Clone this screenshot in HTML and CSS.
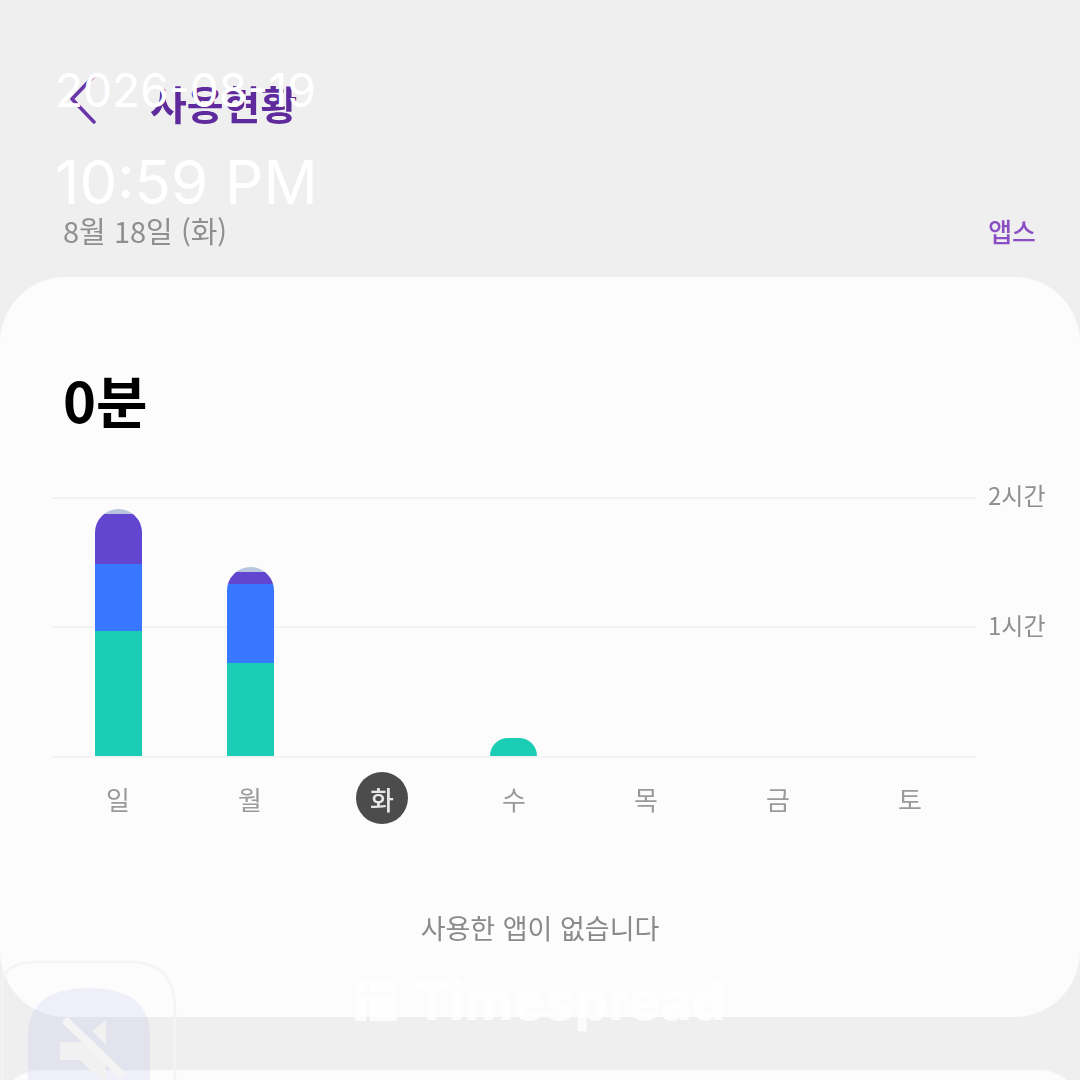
FILE: index.html
```html
<!DOCTYPE html>
<html lang="ko">

<head>
    <meta charset="UTF-8">
    <meta name="viewport" content="width=device-width, initial-scale=1.0">
    <title>사용현황</title>
    <link rel="stylesheet" href="styles.css">
</head>

<body>
    <div class="page">
        <header class="app-bar">
            <svg class="back-icon" width="26" height="52" viewBox="0 0 26 52">
                <path d="M24 2 L2 25 L24 48" fill="none" stroke="#6a35a8" stroke-width="3.5" stroke-linecap="round" stroke-linejoin="round" />
            </svg>
            <h1 class="app-title">사용현황</h1>
        </header>

        <div class="sub-bar">
            <span class="sub-date">8월 18일 (화)</span>
            <span class="sub-link">앱스</span>
        </div>

        <main class="card">
            <div class="total">0분</div>

            <div class="chart">
                <div class="plot">
                    <div class="slot">
                        <div class="bar">
                            <div class="seg seg-top" style="height: 5px"></div>
                            <div class="seg seg-purple" style="height: 50px"></div>
                            <div class="seg seg-blue" style="height: 67px"></div>
                            <div class="seg seg-green" style="height: 125px"></div>
                        </div>
                    </div>
                    <div class="slot">
                        <div class="bar">
                            <div class="seg seg-top" style="height: 5px"></div>
                            <div class="seg seg-purple" style="height: 12px"></div>
                            <div class="seg seg-blue" style="height: 79px"></div>
                            <div class="seg seg-green" style="height: 93px"></div>
                        </div>
                    </div>
                    <div class="slot"></div>
                    <div class="slot">
                        <div class="bar">
                            <div class="seg seg-green" style="height: 18px"></div>
                        </div>
                    </div>
                    <div class="slot"></div>
                    <div class="slot"></div>
                    <div class="slot"></div>
                </div>
                <div class="y-axis">
                    <span>2시간</span>
                    <span>1시간</span>
                </div>
            </div>

            <div class="days">
                <span class="day">일</span>
                <span class="day">월</span>
                <span class="day"><span class="day-today">화</span></span>
                <span class="day">수</span>
                <span class="day">목</span>
                <span class="day">금</span>
                <span class="day">토</span>
            </div>

            <p class="empty">사용한 앱이 없습니다</p>
        </main>

        <div class="card-next"></div>

        <!-- stamp and watermark sit on top of the screenshot -->
        <div class="stamp">
            <div class="stamp-date">2026-08-19</div>
            <div class="stamp-time">10:59 PM</div>
        </div>

        <div class="watermark">
            <svg width="44" height="42" viewBox="0 0 44 42" fill="#fff">
                <circle cx="6" cy="6" r="6" />
                <rect x="15" y="1" width="27" height="11" />
                <rect y="15" width="11" height="26" />
                <rect x="15" y="15" width="27" height="26" />
            </svg>
            <span>Timespread</span>
        </div>

        <svg class="app-icon" width="180" height="120" viewBox="0 0 180 120">
            <path d="M2 120 L2 24 Q2 2 40 2 L130 2 Q175 2 175 50 L175 120" fill="none" stroke="#f4f4f4" stroke-width="2.5" />
            <path d="M28 120 L28 76 Q28 28 89 28 Q150 28 150 76 L150 120 Z" fill="#4650dc" fill-opacity="0.075" />
            <path d="M60 82 L86 82 L106 102 L106 125 L80 100 L60 100 Z" fill="#f1f1f1" />
            <path d="M92 71 L106 60 L106 85 Z" fill="#f1f1f1" />
            <path d="M67 62 L121 114" fill="none" stroke="#f4f4f4" stroke-width="8" stroke-linecap="round" />
        </svg>
    </div>
</body>

</html>
```

FILE: styles.css
```css
* {
    box-sizing: border-box;
}

body {
    margin: 0;
    font-family: "Noto Sans CJK KR", "Noto Sans", sans-serif;
}

.page {
    position: relative;
    width: 1080px;
    height: 1080px;
    overflow: hidden;
    background-color: #efefef;
}

.app-bar {
    display: flex;
    align-items: center;
    height: 130px;
    padding: 70px 0 0 70px;
    filter: blur(0.5px);
}

.back-icon {
    flex: none;
}

.app-title {
    margin: 6px 0 0 54px;
    font-size: 40px;
    font-weight: 700;
    line-height: 52px;
    color: #5e2a9c;
}

.sub-bar {
    display: flex;
    justify-content: space-between;
    align-items: center;
    height: 44px;
    margin-top: 78px;
    padding: 0 44px 0 63px;
    filter: blur(0.5px);
}

.sub-date {
    font-size: 29px;
    color: #8f8f8f;
}

.sub-link {
    font-size: 26px;
    font-weight: 500;
    color: #8a4fc4;
}

.card {
    height: 740px;
    margin-top: 25px;
    padding-top: 84px;
    border-radius: 66px;
    background-color: #fcfcfc;
    filter: blur(0.5px);
}

.total {
    height: 76px;
    padding-left: 63px;
    font-size: 56px;
    font-weight: 700;
    line-height: 76px;
    color: #000;
}

.chart {
    display: flex;
    margin-top: 60px;
    padding-left: 52px;
}

.plot {
    display: grid;
    grid-template-columns: repeat(7, 131.7px);
    align-items: end;
    width: 924px;
    height: 261px;
    padding-left: 1px;
    border-top: 2px solid #f3f3f3;
    border-bottom: 2px solid #f3f3f3;
    background: linear-gradient(#f3f3f3, #f3f3f3) 0 127px / 100% 2px no-repeat;
}

.slot {
    display: flex;
    justify-content: center;
}

.bar {
    display: flex;
    flex-direction: column;
    width: 47px;
    border-radius: 24px 24px 0 0;
    overflow: hidden;
}

.seg-top {
    background-color: #b8c6de;
}

.seg-purple {
    background-color: #6246d0;
}

.seg-blue {
    background-color: #3877ff;
}

.seg-green {
    background-color: #1ccdb5;
}

.y-axis {
    display: flex;
    flex-direction: column;
    gap: 96px;
    margin: -19px 0 0 12px;
    font-size: 24px;
    line-height: 34px;
    color: #8f8f8f;
}

.days {
    display: grid;
    grid-template-columns: repeat(7, 132px);
    align-items: center;
    height: 52px;
    margin: 14px 0 0 52px;
    font-size: 26px;
    color: #9a9a9a;
    text-align: center;
}

.day-today {
    display: inline-flex;
    justify-content: center;
    align-items: center;
    width: 52px;
    height: 52px;
    border-radius: 50%;
    background-color: #4c4c4c;
    color: #e6e6e6;
    font-weight: 500;
}

.empty {
    margin: 84px 0 0;
    font-size: 27px;
    line-height: 40px;
    color: #8a8a8a;
    text-align: center;
}

.card-next {
    height: 60px;
    margin-top: 53px;
    border-radius: 40px 40px 0 0;
    background-color: #fcfcfc;
}

.stamp {
    position: absolute;
    top: 60px;
    left: 55px;
    color: #fff;
    font-family: Inter, sans-serif;
    font-weight: 400;
}

.stamp-date {
    font-size: 46px;
    line-height: 60px;
}

.stamp-time {
    margin-top: 24px;
    font-size: 60px;
    line-height: 76px;
}

.watermark {
    position: absolute;
    top: 972px;
    left: 355px;
    display: flex;
    align-items: center;
    gap: 15px;
    color: #fff;
    font-family: Inter, sans-serif;
    font-size: 52.5px;
    font-weight: 800;
    line-height: 58px;
    opacity: 0.85;
}

.app-icon {
    position: absolute;
    top: 960px;
    left: 0;
}
```
